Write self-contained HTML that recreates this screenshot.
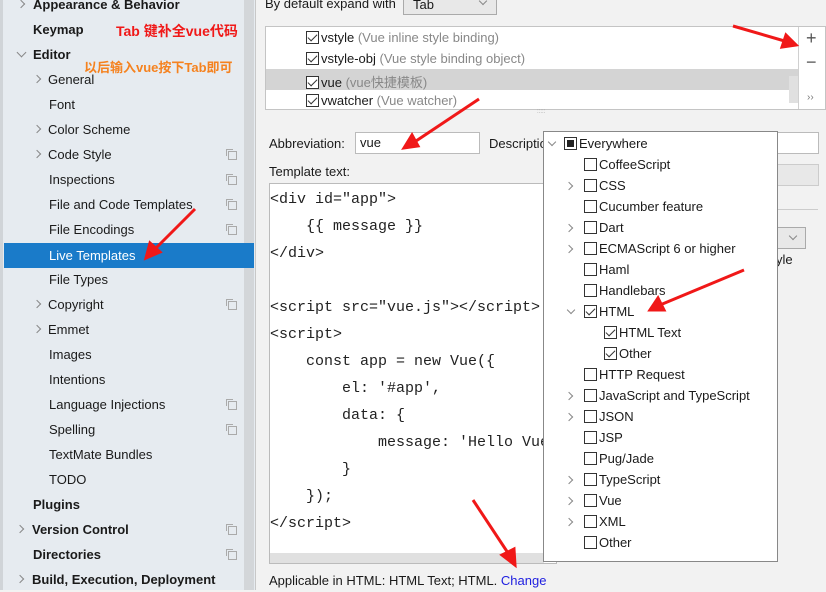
<!DOCTYPE html>
<html><head><meta charset="utf-8"><style>
*{box-sizing:border-box;margin:0;padding:0}
body{width:826px;height:590px;overflow:hidden;background:#f2f2f2;font-family:"Liberation Sans","Noto Sans CJK SC",sans-serif;font-size:13px;color:#1a1a1a;position:relative}
.a{position:absolute;white-space:nowrap}
#side{position:absolute;left:0;top:0;width:256px;height:590px;background:#e6ebf0;border-left:3px solid #d0d4d8;border-right:1px solid #c8c8c8}
#sb{position:absolute;left:241px;top:0;width:10px;height:590px;background:#d3d6d9}
.r{position:absolute;left:0;width:244px;height:25px;line-height:25px}
.b{font-weight:bold}
.chev{position:absolute;top:9px;width:6px;height:6px;border:solid #888;border-width:1.5px 1.5px 0 0;transform:rotate(45deg)}
.chd{position:absolute;top:7px;width:7px;height:7px;border:solid #888;border-width:0 1.5px 1.5px 0;transform:rotate(45deg)}
.cp{position:absolute;left:228px;width:9px;height:9px;border:1px solid #aaa;top:9px}
.cp:after{content:"";position:absolute;left:-3px;top:-3px;width:6px;height:6px;border:1px solid #aaa;border-right:none;border-bottom:none}
.cb{display:inline-block;width:13px;height:13px;border:1px solid #333;background:#fff;vertical-align:-2px;margin-right:2px;position:relative}
.ck:after{content:"";position:absolute;left:3px;top:0px;width:4px;height:8px;border:solid #333;border-width:0 1.5px 1.5px 0;transform:rotate(45deg)}
.pi{position:absolute;height:21px;line-height:21px;font-size:13px}
.pc{position:absolute;width:6px;height:6px;border:solid #888;border-width:1.5px 1.5px 0 0;transform:rotate(45deg)}
.pd{position:absolute;width:6px;height:6px;border:solid #888;border-width:0 1.5px 1.5px 0;transform:rotate(45deg)}
.code{font-family:"Liberation Mono",monospace;font-size:15px;position:absolute;white-space:pre;line-height:27px;color:#222}
</style></head><body>
<div id="side"><div id="sb"></div></div>
<div class="a" style="left:0;top:0;width:256px;height:590px">
<div class="r b" style="top:-8px"><span class="chev" style="left:18px"></span><span style="position:absolute;left:33px">Appearance &amp; Behavior</span></div>
<div class="r b" style="top:17px"><span style="position:absolute;left:33px">Keymap</span></div>
<div class="r b" style="top:42px"><span class="chd" style="left:18px"></span><span style="position:absolute;left:33px">Editor</span></div>
<div class="r" style="top:67px"><span class="chev" style="left:34px"></span><span style="position:absolute;left:48px">General</span></div>
<div class="r" style="top:92px"><span style="position:absolute;left:49px">Font</span></div>
<div class="r" style="top:117px"><span class="chev" style="left:34px"></span><span style="position:absolute;left:48px">Color Scheme</span></div>
<div class="r" style="top:142px"><span class="chev" style="left:34px"></span><span style="position:absolute;left:48px">Code Style</span><i class="cp"></i></div>
<div class="r" style="top:167px"><span style="position:absolute;left:49px">Inspections</span><i class="cp"></i></div>
<div class="r" style="top:192px"><span style="position:absolute;left:49px">File and Code Templates</span><i class="cp"></i></div>
<div class="r" style="top:217px"><span style="position:absolute;left:49px">File Encodings</span><i class="cp"></i></div>
<div class="r" style="top:243px;left:4px;width:250px;background:#1a7bc9;color:#fff"><span style="position:absolute;left:45px">Live Templates</span></div>
<div class="r" style="top:267px"><span style="position:absolute;left:49px">File Types</span></div>
<div class="r" style="top:292px"><span class="chev" style="left:34px"></span><span style="position:absolute;left:48px">Copyright</span><i class="cp"></i></div>
<div class="r" style="top:317px"><span class="chev" style="left:34px"></span><span style="position:absolute;left:48px">Emmet</span></div>
<div class="r" style="top:342px"><span style="position:absolute;left:49px">Images</span></div>
<div class="r" style="top:367px"><span style="position:absolute;left:49px">Intentions</span></div>
<div class="r" style="top:392px"><span style="position:absolute;left:49px">Language Injections</span><i class="cp"></i></div>
<div class="r" style="top:417px"><span style="position:absolute;left:49px">Spelling</span><i class="cp"></i></div>
<div class="r" style="top:442px"><span style="position:absolute;left:49px">TextMate Bundles</span></div>
<div class="r" style="top:467px"><span style="position:absolute;left:49px">TODO</span></div>
<div class="r b" style="top:492px"><span style="position:absolute;left:33px">Plugins</span></div>
<div class="r b" style="top:517px"><span class="chev" style="left:17px"></span><span style="position:absolute;left:32px">Version Control</span><i class="cp"></i></div>
<div class="r b" style="top:542px"><span style="position:absolute;left:33px">Directories</span><i class="cp"></i></div>
<div class="r b" style="top:567px"><span class="chev" style="left:17px"></span><span style="position:absolute;left:32px">Build, Execution, Deployment</span></div>
<div class="a b" style="left:116px;top:21px;color:#f01818;font-size:14px">Tab 键补全vue代码</div>
<div class="a b" style="left:84px;top:57px;color:#f5821f;font-size:13px">以后输入vue按下Tab即可</div>
</div>

<div class="a" style="left:265px;top:-4px">By default expand with</div>
<div class="a" style="left:403px;top:-6px;width:94px;height:21px;border:1px solid #aaa;background:#e8e8e8;padding-left:9px;line-height:19px">Tab<span class="pd" style="right:10px;top:3px"></span></div>
<div class="a" style="left:265px;top:26px;width:561px;height:84px;border:1px solid #c4c4c4;background:#fff"></div>
<div class="a" style="left:266px;top:69px;width:532px;height:21px;background:#d4d4d4"></div>
<div class="a" style="left:789px;top:76px;width:9px;height:27px;background:#e0e0e0"></div>
<div class="a" style="left:798px;top:27px;width:1px;height:82px;background:#d0d0d0"></div>
<div class="a" style="left:806px;top:28px;font-size:18px;color:#555">+</div>
<div class="a" style="left:806px;top:52px;font-size:18px;color:#555">−</div>
<div class="a" style="left:807px;top:92px;font-size:10px;color:#777">››</div>
<div class="a" style="left:306px;top:30px"><span class="cb ck"></span>vstyle <span style="color:#888">(Vue inline style binding)</span></div>
<div class="a" style="left:306px;top:51px"><span class="cb ck"></span>vstyle-obj <span style="color:#888">(Vue style binding object)</span></div>
<div class="a" style="left:306px;top:72px"><span class="cb ck"></span>vue <span style="color:#888">(vue快捷模板)</span></div>
<div class="a" style="left:306px;top:93px"><span class="cb ck"></span>vwatcher <span style="color:#888">(Vue watcher)</span></div>
<div class="a" style="left:537px;top:109px;font-size:6px;color:#999">:::::</div>

<div class="a" style="left:269px;top:136px">Abbreviation:</div>
<div class="a" style="left:355px;top:132px;width:125px;height:22px;border:1px solid #bbb;background:#fff;padding-left:4px;line-height:20px">vue</div>
<div class="a" style="left:489px;top:136px">Description</div>
<div class="a" style="left:776px;top:132px;width:43px;height:22px;border:1px solid #bbb;background:#fff"></div>
<div class="a" style="left:776px;top:164px;width:43px;height:22px;border:1px solid #ccc;background:#e8e8e8"></div>
<div class="a" style="left:776px;top:209px;width:42px;height:1px;background:#ccc"></div>
<div class="a" style="left:776px;top:227px;width:30px;height:22px;border:1px solid #aaa;background:#e8e8e8"><span class="pd" style="left:13px;top:5px"></span></div>
<div class="a" style="left:776px;top:252px">yle</div>
<div class="a" style="left:269px;top:164px">Template text:</div>
<div class="a" style="left:269px;top:183px;width:288px;height:381px;background:#fff;border:1px solid #bbb"></div>
<div class="a" style="left:270px;top:553px;width:274px;height:10px;background:#e0e0e0"></div>
<div class="code" style="left:270px;top:186px">&lt;div id="app"&gt;
    {{ message }}
&lt;/div&gt;

&lt;script src="vue.js"&gt;&lt;/script&gt;
&lt;script&gt;
    const app = new Vue({
        el: '#app',
        data: {
            message: 'Hello Vue
        }
    });
&lt;/script&gt;</div>
<div class="a" style="left:269px;top:573px">Applicable in HTML: HTML Text; HTML. <span style="color:#2020e0">Change</span></div>

<div class="a" style="left:543px;top:131px;width:235px;height:431px;background:#fff;border:1px solid #888"></div>
<span class="pd" style="left:549px;top:139px"></span>
<div class="pi" style="left:564px;top:133px"><span class="cb"><i style="position:absolute;left:2px;top:2px;width:7px;height:7px;background:#222"></i></span>Everywhere</div>
<div class="pi" style="left:584px;top:154px"><span class="cb"></span>CoffeeScript</div>
<span class="pc" style="left:566px;top:183px"></span><div class="pi" style="left:584px;top:175px"><span class="cb"></span>CSS</div>
<div class="pi" style="left:584px;top:196px"><span class="cb"></span>Cucumber feature</div>
<span class="pc" style="left:566px;top:225px"></span><div class="pi" style="left:584px;top:217px"><span class="cb"></span>Dart</div>
<span class="pc" style="left:566px;top:246px"></span><div class="pi" style="left:584px;top:238px"><span class="cb"></span>ECMAScript 6 or higher</div>
<div class="pi" style="left:584px;top:259px"><span class="cb"></span>Haml</div>
<div class="pi" style="left:584px;top:280px"><span class="cb"></span>Handlebars</div>
<span class="pd" style="left:568px;top:307px"></span><div class="pi" style="left:584px;top:301px"><span class="cb ck"></span>HTML</div>
<div class="pi" style="left:604px;top:322px"><span class="cb ck"></span>HTML Text</div>
<div class="pi" style="left:604px;top:343px"><span class="cb ck"></span>Other</div>
<div class="pi" style="left:584px;top:364px"><span class="cb"></span>HTTP Request</div>
<span class="pc" style="left:566px;top:393px"></span><div class="pi" style="left:584px;top:385px"><span class="cb"></span>JavaScript and TypeScript</div>
<span class="pc" style="left:566px;top:414px"></span><div class="pi" style="left:584px;top:406px"><span class="cb"></span>JSON</div>
<div class="pi" style="left:584px;top:427px"><span class="cb"></span>JSP</div>
<div class="pi" style="left:584px;top:448px"><span class="cb"></span>Pug/Jade</div>
<span class="pc" style="left:566px;top:477px"></span><div class="pi" style="left:584px;top:469px"><span class="cb"></span>TypeScript</div>
<span class="pc" style="left:566px;top:498px"></span><div class="pi" style="left:584px;top:490px"><span class="cb"></span>Vue</div>
<span class="pc" style="left:566px;top:519px"></span><div class="pi" style="left:584px;top:511px"><span class="cb"></span>XML</div>
<div class="pi" style="left:584px;top:532px"><span class="cb"></span>Other</div>

<svg class="a" style="left:0;top:0" width="826" height="590">
<g stroke="#f01818" stroke-width="3" fill="#f01818">
<line x1="195" y1="209" x2="152" y2="252"/><polygon points="146,258 150,243 160,252"/>
<line x1="733" y1="26" x2="788" y2="42"/><polygon points="796,45 782,47 786,35"/>
<line x1="479" y1="99" x2="413" y2="143"/><polygon points="404,148 412,135 418,146"/>
<line x1="744" y1="270" x2="660" y2="305"/><polygon points="650,310 658,298 664,310"/>
<line x1="473" y1="500" x2="510" y2="556"/><polygon points="515,565 502,555 514,549"/>
</g></svg>
</body></html>
